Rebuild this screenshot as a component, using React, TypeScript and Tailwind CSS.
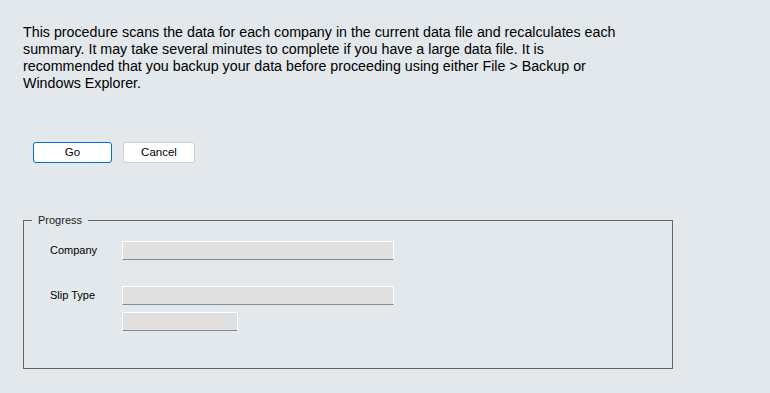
import React from "react";

function Field({ w }: { w: string }) {
  return (
    <div
      className={`${w} h-[19px] bg-[#e0e0e0] border-t border-l border-r border-b border-t-white border-l-white border-r-white border-b-[#8a8a8a]`}
    />
  );
}

export default function App() {
  return (
    <div
      className="w-[770px] h-[393px] bg-[#e2e8eb] text-black overflow-hidden"
      style={{ fontFamily: '"Liberation Sans", Arial, sans-serif' }}
    >
      <div className="pl-[23px] pt-[24px]">
        <p className="w-[605px] text-[14.25px] leading-[17px]">
          This procedure scans the data for each company in the current data file and recalculates each
          summary. It may take several minutes to complete if you have a large data file. It is
          recommended that you backup your data before proceeding using either File &gt; Backup or
          Windows Explorer.
        </p>
        <div className="flex gap-[11px] mt-[50px] ml-[10px] text-[11.5px]">
          <button className="w-[79px] h-[21px] bg-white border border-[#0b6cc4] rounded-[3px] leading-[19px]">
            Go
          </button>
          <button className="w-[72px] h-[21px] bg-white border border-[#cfcfcf] rounded-[3px] leading-[19px]">
            Cancel
          </button>
        </div>
        <fieldset className="mt-[50px] w-[650px] border border-[#646464] pb-[37px] text-[11px]">
          <legend className="ml-[8px] px-[6px] leading-[14px] text-[#222]">Progress</legend>
          <div className="flex items-center mt-[14px] pl-[26px]">
            <div className="w-[72px]">Company</div>
            <Field w="w-[272px]" />
          </div>
          <div className="flex items-center mt-[26px] pl-[26px]">
            <div className="w-[72px]">Slip Type</div>
            <Field w="w-[272px]" />
          </div>
          <div className="flex mt-[7px] pl-[98px]">
            <Field w="w-[116px]" />
          </div>
        </fieldset>
      </div>
    </div>
  );
}
